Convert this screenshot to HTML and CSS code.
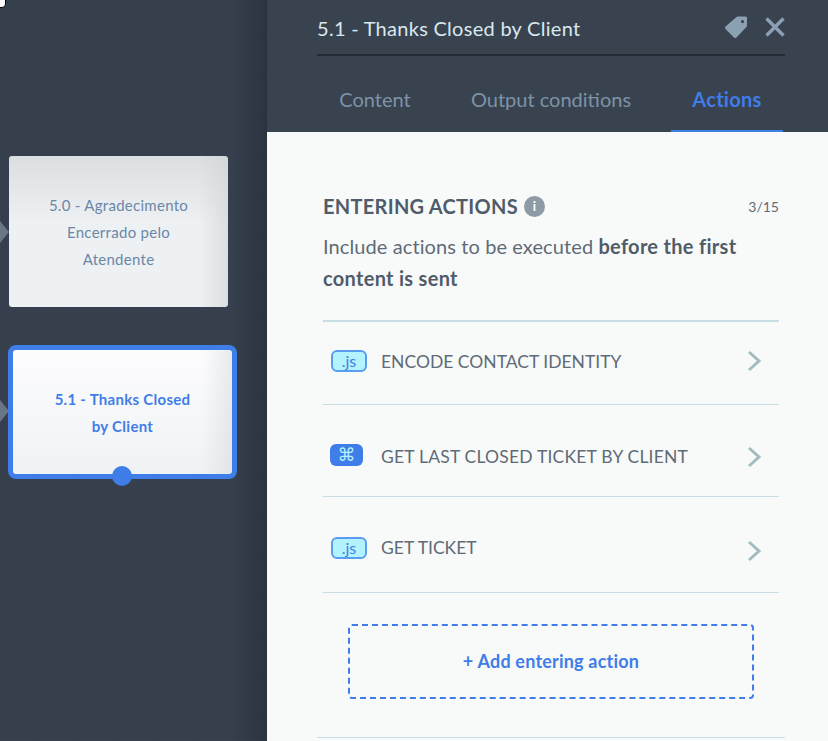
FILE: index.html
```html
<!DOCTYPE html>
<html lang="en">
<head>
  <meta charset="UTF-8">
  <title>Builder</title>
  <link rel="stylesheet" href="styles.css">
</head>
<body>
  <div class="page">
    <div class="canvas">
      <div class="cursor-bit"></div>
      <div class="arrow arrow-top"></div>
      <div class="node node-plain">5.0 - Agradecimento<br>Encerrado pelo<br>Atendente</div>
      <div class="arrow arrow-bottom"></div>
      <div class="node node-active">5.1 - Thanks Closed<br>by Client<span class="node-dot"></span></div>
    </div>
    <div class="panel">
      <div class="panel-header">
        <div class="title-row">
          <div class="title">5.1 - Thanks Closed by Client</div>
          <svg class="icon-tag" width="24" height="24" viewBox="0 0 24 24"><path fill="#8ca0b3" fill-rule="evenodd" d="M14 1.500h7.500a1.500 1.500 0 0 1 1.500 1.500V10.500a2 2 0 0 1-.6 1.400L12.500 22.500a1.800 1.800 0 0 1-2.500 0L1.500 14a1.800 1.800 0 0 1 0-2.500L12.500 2.100A2 2 0 0 1 14 1.500zM18.500 5a1.600 1.600 0 1 0 0 3.200 1.600 1.600 0 0 0 0-3.200z"/></svg>
          <svg class="icon-close" width="20" height="20" viewBox="0 0 20 20"><path d="M1.500 1.500l17 17M18.500 1.500l-17 17" stroke="#8ca0b3" stroke-width="3.400" fill="none"/></svg>
        </div>
        <div class="tabs">
          <div class="tab tab-content">Content</div>
          <div class="tab tab-output">Output conditions</div>
          <div class="tab tab-actions">Actions</div>
        </div>
      </div>
      <div class="panel-body">
        <div class="section">
          <div class="section-head">
            <span class="section-title">ENTERING ACTIONS</span>
            <span class="info">i</span>
            <span class="count">3/15</span>
          </div>
          <p class="section-desc">Include actions to be executed <b>before the first<br>content is sent</b></p>
          <div class="action-list">
            <div class="action-row row-one">
              <span class="badge badge-js">.js</span>
              <span class="action-name">ENCODE CONTACT IDENTITY</span>
              <svg class="chevron" width="16" height="22" viewBox="0 0 16 22"><path d="M2 2l10 9-10 9" stroke="#a3bcc4" stroke-width="3" fill="none"/></svg>
            </div>
            <div class="action-row row-two">
              <span class="badge badge-cmd">⌘</span>
              <span class="action-name name-wide">GET LAST CLOSED TICKET BY CLIENT</span>
              <svg class="chevron" width="16" height="22" viewBox="0 0 16 22"><path d="M2 2l10 9-10 9" stroke="#a3bcc4" stroke-width="3" fill="none"/></svg>
            </div>
            <div class="action-row row-three">
              <span class="badge badge-js">.js</span>
              <span class="action-name">GET TICKET</span>
              <svg class="chevron chevron-low" width="16" height="22" viewBox="0 0 16 22"><path d="M2 2l10 9-10 9" stroke="#a3bcc4" stroke-width="3" fill="none"/></svg>
            </div>
          </div>
          <div class="add-action">+ Add entering action</div>
        </div>
        <div class="bottom-line"></div>
      </div>
    </div>
  </div>
</body>
</html>
```

FILE: styles.css
```css
html, body {
  margin: 0;
  padding: 0;
  height: 100%;
  overflow: hidden;
}
body {
  font-family: "Lato", "Open Sans", sans-serif;
  background-color: #39424f;
}
.page {
  display: flex;
  width: 828px;
  height: 741px;
}

/* left canvas */
.canvas {
  position: relative;
  width: 267px;
  flex-shrink: 0;
  background-color: #353f4d;
  background-image:
    linear-gradient(to right, rgba(255, 255, 255, 0.008) 1px, transparent 1px),
    linear-gradient(to bottom, rgba(255, 255, 255, 0.008) 1px, transparent 1px),
    linear-gradient(to right, transparent 232px, rgba(30, 38, 50, 0.45) 267px);
  background-size: 10px 10px, 10px 10px, 100% 100%;
}
.cursor-bit {
  position: absolute;
  left: -3px;
  top: -4px;
  width: 7px;
  height: 10px;
  background-color: #fff;
  border: 1px solid #000;
  border-radius: 0 0 4px 2px;
}
.arrow {
  position: absolute;
  left: 0;
  width: 0;
  height: 0;
  border-top: 11px solid transparent;
  border-bottom: 11px solid transparent;
  border-left: 9px solid #6a7585;
}
.arrow-top { top: 221px; }
.arrow-bottom { top: 400px; }
.node {
  position: absolute;
  display: block;
  text-align: center;
  box-sizing: border-box;
  font-size: 15px;
  line-height: 27px;
  letter-spacing: 0.28px;
}
.node-plain {
  left: 9px;
  top: 156px;
  width: 219px;
  height: 151px;
  padding-top: 36px;
  color: #6a87a8;
  border-radius: 3px;
  background:
    linear-gradient(to left, rgba(205, 208, 211, 0.55), rgba(205, 208, 211, 0) 30px),
    linear-gradient(to bottom, #dcdfe2, #eef1f3 45%, #eef1f3);
}
.node-active {
  left: 8px;
  top: 345px;
  width: 229px;
  height: 134px;
  padding-top: 36px;
  color: #3f7de8;
  font-weight: 700;
  border: 5px solid #3f7de8;
  border-radius: 8px;
  background:
    linear-gradient(to left, rgba(215, 218, 221, 0.55), rgba(215, 218, 221, 0) 30px),
    linear-gradient(to bottom, #fdfdfe, #eff2f5);
}
.node-dot {
  position: absolute;
  left: 99px;
  bottom: -12px;
  width: 20px;
  height: 20px;
  border-radius: 50%;
  background-color: #3f7de8;
}

/* right panel */
.panel {
  flex: 1;
  display: flex;
  flex-direction: column;
}
.panel-header {
  height: 132px;
  box-sizing: border-box;
  background-color: #39424f;
  padding: 0 43px 0 50px;
}
.title-row {
  display: flex;
  align-items: center;
  height: 54px;
  border-bottom: 2px solid #262c35;
}
.title {
  flex: 1;
  font-size: 20px;
  color: #d8e8ee;
  letter-spacing: 0.28px;
  padding-top: 2px;
}
.icon-tag { margin-right: 17px; }
.tabs {
  display: flex;
  height: 76px;
  margin-right: 2px;
}
.tab {
  display: flex;
  align-items: center;
  justify-content: center;
  font-size: 20px;
  color: #7d93a8;
  box-sizing: border-box;
  padding-top: 10px;
}
.tab-content { width: 116px; }
.tab-output { width: 236px; padding-right: 0; }
.tab-actions {
  width: 112px;
  margin-left: 2px;
  color: #3f7de8;
  font-weight: 700;
  border-bottom: 2px solid #3f7de8;
  padding-top: 12px;
  letter-spacing: 0.3px;
}
.panel-body {
  flex: 1;
  background-color: #f8fafa;
  padding: 0 43px 0 50px;
}
.section {
  padding: 60px 6px 0;
}
.section-head {
  display: flex;
  align-items: center;
  height: 28px;
}
.section-title {
  font-size: 20px;
  font-weight: 700;
  color: #505c69;
  letter-spacing: 0.28px;
}
.info {
  width: 21px;
  height: 21px;
  margin-left: 6px;
  border-radius: 50%;
  background-color: #8e9ba6;
  color: #fff;
  font-size: 13px;
  font-weight: 700;
  line-height: 21px;
  text-align: center;
}
.count {
  margin-left: auto;
  font-size: 14px;
  color: #5f6b77;
}
.section-desc {
  margin: 10px 0 0;
  padding-bottom: 26px;
  font-size: 20px;
  line-height: 32px;
  color: #5f6b77;
  letter-spacing: 0.1px;
}
.section-desc b {
  color: #505c69;
  letter-spacing: 0.3px;
}
.action-list {
  border-top: 2px solid #c9dde5;
}
.action-row {
  display: flex;
  align-items: center;
  box-sizing: border-box;
  border-bottom: 1px solid #c9dde5;
  padding-left: 8px;
  padding-right: 16px;
}
.row-one { height: 83px; padding-bottom: 4px; }
.row-two { height: 92px; padding-top: 12px; }
.row-three { height: 96px; padding-top: 6px; }
.chevron-low { margin-top: 6px; }
.badge {
  display: inline-block;
  width: 36px;
  height: 22px;
  box-sizing: border-box;
  border-radius: 6px;
  text-align: center;
  font-size: 16px;
  line-height: 18px;
}
.badge-js {
  color: #3f7de8;
  background-color: #b3f3fd;
  border: 2px solid #5a9cf0;
}
.badge-cmd {
  width: 33px;
  margin-right: 3px;
  margin-left: -1px;
  margin-top: -4px;
  background-color: #3f7de8;
  color: #b3f3fd;
  line-height: 22px;
  font-size: 18px;
  font-family: "DejaVu Sans", sans-serif;
}
.action-name {
  flex: 1;
  margin-left: 14px;
  font-size: 17.5px;
  color: #5f6b77;
}
.name-wide {
  margin-left: 15px;
  letter-spacing: 0.2px;
}
.add-action {
  display: flex;
  align-items: center;
  justify-content: center;
  width: 406px;
  height: 75px;
  box-sizing: border-box;
  margin: 31px 0 0 25px;
  padding-bottom: 2px;
  border: 2px dashed #3f7de8;
  border-radius: 4px;
  color: #3f7de8;
  font-size: 18px;
  font-weight: 700;
  letter-spacing: 0.2px;
}
.bottom-line {
  margin-top: 38px;
  border-top: 1px solid #c9dde5;
}
```
